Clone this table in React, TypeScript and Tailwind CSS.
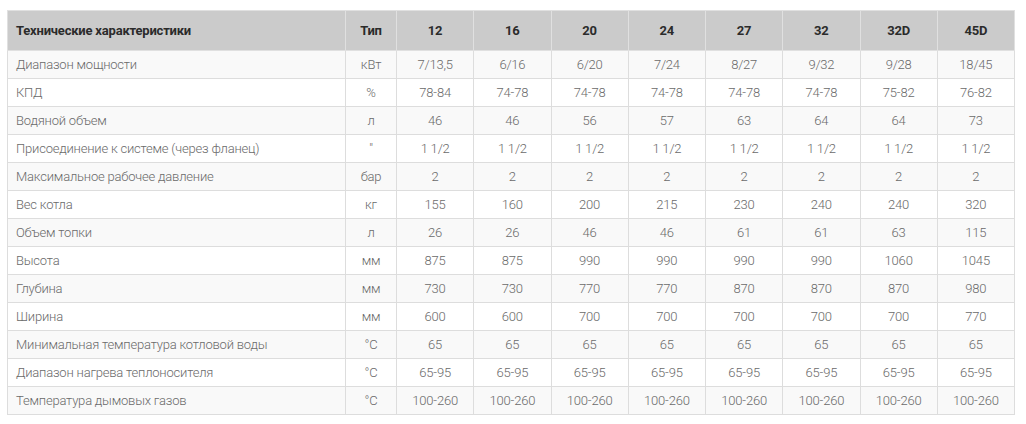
const COLS = ["12", "16", "20", "24", "27", "32", "32D", "45D"];

const ROWS: [string, string, string[]][] = [
  ["Диапазон мощности", "кВт", ["7/13,5", "6/16", "6/20", "7/24", "8/27", "9/32", "9/28", "18/45"]],
  ["КПД", "%", ["78-84", "74-78", "74-78", "74-78", "74-78", "74-78", "75-82", "76-82"]],
  ["Водяной объем", "л", ["46", "46", "56", "57", "63", "64", "64", "73"]],
  ["Присоединение к системе (через фланец)", "\"", ["1 1/2", "1 1/2", "1 1/2", "1 1/2", "1 1/2", "1 1/2", "1 1/2", "1 1/2"]],
  ["Максимальное рабочее давление", "бар", ["2", "2", "2", "2", "2", "2", "2", "2"]],
  ["Вес котла", "кг", ["155", "160", "200", "215", "230", "240", "240", "320"]],
  ["Объем топки", "л", ["26", "26", "46", "46", "61", "61", "63", "115"]],
  ["Высота", "мм", ["875", "875", "990", "990", "990", "990", "1060", "1045"]],
  ["Глубина", "мм", ["730", "730", "770", "770", "870", "870", "870", "980"]],
  ["Ширина", "мм", ["600", "600", "700", "700", "700", "700", "700", "770"]],
  ["Минимальная температура котловой воды", "°C", ["65", "65", "65", "65", "65", "65", "65", "65"]],
  ["Диапазон нагрева теплоносителя", "°C", ["65-95", "65-95", "65-95", "65-95", "65-95", "65-95", "65-95", "65-95"]],
  ["Температура дымовых газов", "°C", ["100-260", "100-260", "100-260", "100-260", "100-260", "100-260", "100-260", "100-260"]],
];

export default function App() {
  return (
    <div className="bg-white w-[1026px] h-[424px] pt-[10px] pl-[7px] font-['Roboto',sans-serif]">
      <table className="w-[1008px] border-collapse table-fixed text-[13px]">
        <colgroup>
          <col className="w-[338px]" />
          <col className="w-[51px]" />
          {COLS.map((c) => (
            <col key={c} />
          ))}
        </colgroup>
        <thead>
          <tr className="h-[40px] bg-[#cbcbcb] text-[#2b2b2b] font-bold tracking-[-0.2px]">
            <th className="text-left pl-2 border border-[#e0e0e0]">Технические характеристики</th>
            <th className="text-center border border-[#e0e0e0]">Тип</th>
            {COLS.map((c) => (
              <th key={c} className="text-center border border-[#e0e0e0]">
                {c}
              </th>
            ))}
          </tr>
        </thead>
        <tbody className="text-[#6a6a6a] font-light tracking-[-0.2px]">
          {ROWS.map(([name, unit, vals], i) => (
            <tr key={name} className={`h-[28px] ${i % 2 === 0 ? "bg-[#f9f9f9]" : "bg-white"}`}>
              <td className="text-left pl-2 border border-[#dddddd]">{name}</td>
              <td className="text-center border border-[#dddddd]">{unit}</td>
              {vals.map((v, j) => (
                <td key={j} className="text-center border border-[#dddddd]">
                  {v}
                </td>
              ))}
            </tr>
          ))}
        </tbody>
      </table>
    </div>
  );
}
